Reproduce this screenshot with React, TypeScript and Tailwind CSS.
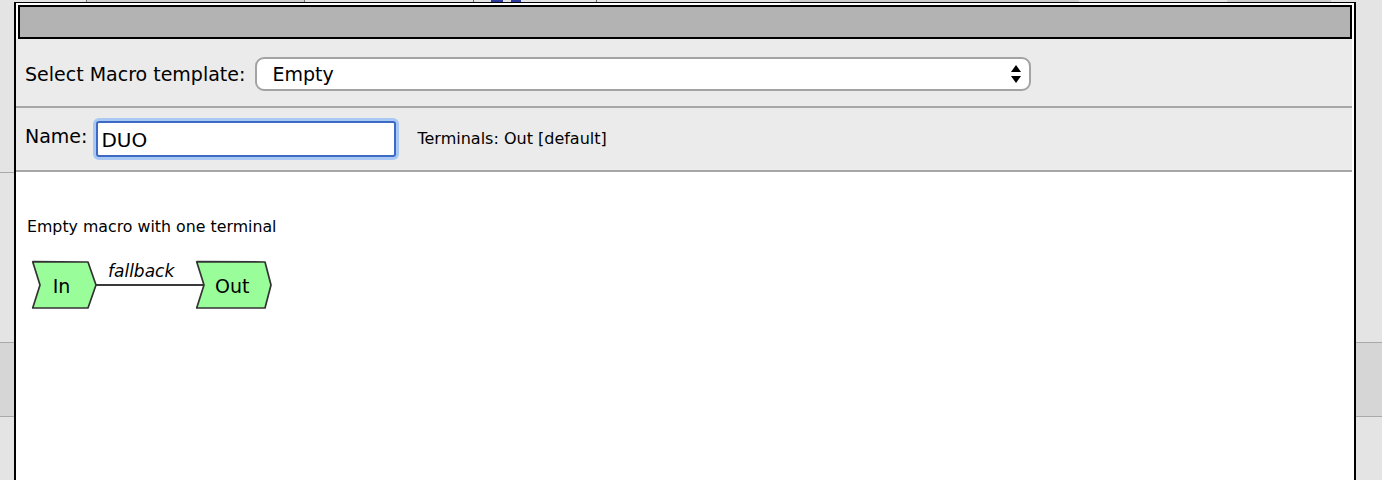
import React from "react";

function Diagram() {
  return (
    <svg width="250" height="54" viewBox="0 0 250 54" className="block">
      <line x1="66" y1="26" x2="174" y2="26" stroke="#3a3a3a" strokeWidth="2" />
      <polygon
        points="2.7,2.7 58,3 66,26 58,49 2.7,49 10,26"
        fill="#99fd99"
        stroke="#333"
        strokeWidth="1.7"
        strokeLinejoin="round"
      />
      <polygon
        points="166.7,2.7 235,3 241,26 235,49 166.7,49 174,26"
        fill="#99fd99"
        stroke="#333"
        strokeWidth="1.7"
        strokeLinejoin="round"
      />
      <text x="22.7" y="33.8" fontFamily="'DejaVu Sans', Verdana, sans-serif" fontSize="19" fill="#000">
        In
      </text>
      <text x="185" y="33.8" fontFamily="'DejaVu Sans', Verdana, sans-serif" fontSize="19" fill="#000">
        Out
      </text>
      <text
        x="78"
        y="17.5"
        fontFamily="'DejaVu Sans', Verdana, sans-serif"
        fontSize="17"
        fontStyle="italic"
        fill="#000"
      >
        fallback
      </text>
    </svg>
  );
}

function SelectArrows() {
  return (
    <svg width="10" height="20" viewBox="0 0 10 20" className="block">
      <polygon points="5,1 10,8 0,8" fill="#000" />
      <polygon points="0,12 10,12 5,19" fill="#000" />
    </svg>
  );
}

export default function App() {
  return (
    <div
      className="relative w-[1382px] h-[480px] overflow-hidden bg-[#e4e4e4] text-black"
      style={{ fontFamily: "'DejaVu Sans', Verdana, sans-serif" }}
    >
      {/* background page */}
      <div className="flex flex-col w-full h-full">
        <div className="flex h-[2px] w-full">
          <div className="w-[86px]" />
          <div className="w-[219px] bg-[#cfcfcf] border-x border-[#777]" />
          <div className="w-[168px]" />
          <div className="w-px bg-[#666]" />
          <div className="w-[17px]" />
          <div className="w-[12px] bg-[#2b3a9c]" />
          <div className="w-[8px]" />
          <div className="w-[10px] bg-[#2b3a9c]" />
          <div className="w-[75px]" />
          <div className="w-px bg-[#666]" />
          <div className="w-[193px]" />
          <div className="w-[289px] bg-[#cdcdcd]" />
          <div className="w-[148px]" />
          <div className="w-[104px] bg-[#cdcdcd]" />
        </div>
        <div className="h-[170px]" />
        <div className="flex h-px">
          <div className="w-[14px] bg-[#a9a9a9]" />
        </div>
        <div className="h-[169px]" />
        <div className="h-px bg-[#a9a9a9]" />
        <div className="h-[73px] bg-[#d6d6d6]" />
        <div className="h-px bg-[#a9a9a9]" />
        <div className="flex-1" />
      </div>

      {/* dialog */}
      <div className="absolute left-[14px] top-[2px] w-[1342px] h-[500px] bg-white border-black border-x-2 border-t flex flex-col">
        <div className="mt-[2px] mx-[2px] h-[34px] border-2 border-black bg-[#b3b3b3]" />

        <div className="mr-[2px] h-[69px] bg-[#ebebeb] border-b-2 border-[#a6a6a6] flex items-center pl-[9px] pt-[2px]">
          <span className="text-[19px] leading-[22px] whitespace-nowrap">Select Macro template:</span>
          <div className="ml-[10px] w-[776px] h-[34px] bg-white border-2 border-[#a3a3a3] rounded-[9px] flex items-center pl-[15px] pr-[8px]">
            <span className="text-[19px] leading-[22px] flex-1">Empty</span>
            <SelectArrows />
          </div>
        </div>

        <div className="mr-[2px] h-[64px] bg-[#ebebeb] border-b-2 border-[#a6a6a6] flex items-center pl-[9px]">
          <span className="text-[19px] leading-[22px] whitespace-nowrap -mt-[6px]">Name:</span>
          <div className="ml-[9px] w-[300px] h-[36px] bg-white border-2 border-[#3d6bc4] rounded-[3px] shadow-[0_0_0_3px_#a9c9f4] flex items-center pl-[3px]">
            <span className="text-[20px] leading-[22px] mt-[1px]">DUO</span>
          </div>
          <span className="ml-[21px] text-[16px] leading-[20px] whitespace-nowrap">Terminals: Out [default]</span>
        </div>

        <div className="pl-[11px] pt-[45px]">
          <div className="text-[15.8px] leading-[19px] whitespace-nowrap">Empty macro with one terminal</div>
          <div className="mt-[23px] ml-[3px]">
            <Diagram />
          </div>
        </div>
      </div>
    </div>
  );
}
